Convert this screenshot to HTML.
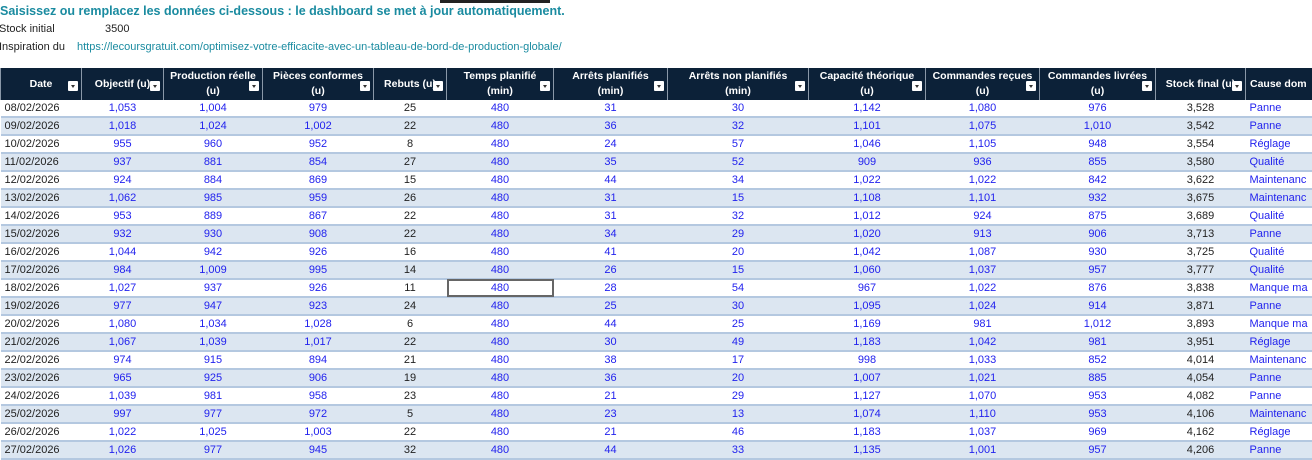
<!DOCTYPE html>
<html><head><meta charset="utf-8"><style>
body{margin:0;width:1312px;height:454px;overflow:hidden;background:#fff;font-family:"Liberation Sans",sans-serif;font-size:11px;color:#222;position:relative}
.t{position:absolute;white-space:nowrap}
table{position:absolute;left:0;top:68px;border-collapse:collapse;table-layout:fixed;width:1335px}
th{background:#0c2138;color:#fff;font-weight:bold;font-size:10.5px;height:32px;padding:0;border-left:1px solid #8a98a8;line-height:15px;position:relative;text-align:center;white-space:nowrap;overflow:hidden}
th i{position:absolute;right:3px;bottom:9px;width:10px;height:10px;background:#fff;border-radius:1px}
th i:after{content:"";position:absolute;left:3px;top:4px;border:2px solid transparent;border-top:3px solid #333}
td{height:16px;padding:0;border-bottom:2px solid #b4c8e0;text-align:center;color:#2222ee;white-space:nowrap;overflow:hidden}
tr.a td{background:#dce6f1}
td.d{text-align:left;padding-left:4px;color:#222}
td.k{color:#222}
td.c{text-align:left;padding-left:4px}
</style></head><body>
<div class="t" style="left:440px;top:0;width:110px;height:3px;background:#222"></div>
<div class="t" style="left:0;top:4px;font-weight:bold;color:#1a8ba0;font-size:12.5px">Saisissez ou remplacez les données ci-dessous : le dashboard se met à jour automatiquement.</div>
<div class="t" style="left:-1px;top:23px">Stock initial</div>
<div class="t" style="left:105px;top:23px">3500</div>
<div class="t" style="left:-1px;top:41px">Inspiration du</div>
<div class="t" style="left:77px;top:41px;color:#1a8ba0">https://lecoursgratuit.com/optimisez-votre-efficacite-avec-un-tableau-de-bord-de-production-globale/</div>
<table>
<colgroup><col style="width:81px"><col style="width:82px"><col style="width:99px"><col style="width:111px"><col style="width:73px"><col style="width:107px"><col style="width:114px"><col style="width:141px"><col style="width:117px"><col style="width:114px"><col style="width:116px"><col style="width:90px"><col style="width:90px"></colgroup>
<tr><th>Date <i></i></th><th>Objectif (u)<i></i></th><th>Production réelle<br>(u)<i></i></th><th>Pièces conformes<br>(u)<i></i></th><th>Rebuts (u)<i></i></th><th>Temps planifié<br>(min)<i></i></th><th>Arrêts planifiés<br>(min)<i></i></th><th>Arrêts non planifiés<br>(min)<i></i></th><th>Capacité théorique<br>(u)<i></i></th><th>Commandes reçues<br>(u)<i></i></th><th>Commandes livrées<br>(u)<i></i></th><th>Stock final (u)<i></i></th><th style="text-align:left;padding-left:4px">Cause dom</th></tr>
<tr><td class="d">08/02/2026</td><td>1,053</td><td>1,004</td><td>979</td><td class="k">25</td><td>480</td><td>31</td><td>30</td><td>1,142</td><td>1,080</td><td>976</td><td class="k">3,528</td><td class="c">Panne</td></tr>
<tr class="a"><td class="d">09/02/2026</td><td>1,018</td><td>1,024</td><td>1,002</td><td class="k">22</td><td>480</td><td>36</td><td>32</td><td>1,101</td><td>1,075</td><td>1,010</td><td class="k">3,542</td><td class="c">Panne</td></tr>
<tr><td class="d">10/02/2026</td><td>955</td><td>960</td><td>952</td><td class="k">8</td><td>480</td><td>24</td><td>57</td><td>1,046</td><td>1,105</td><td>948</td><td class="k">3,554</td><td class="c">Réglage</td></tr>
<tr class="a"><td class="d">11/02/2026</td><td>937</td><td>881</td><td>854</td><td class="k">27</td><td>480</td><td>35</td><td>52</td><td>909</td><td>936</td><td>855</td><td class="k">3,580</td><td class="c">Qualité</td></tr>
<tr><td class="d">12/02/2026</td><td>924</td><td>884</td><td>869</td><td class="k">15</td><td>480</td><td>44</td><td>34</td><td>1,022</td><td>1,022</td><td>842</td><td class="k">3,622</td><td class="c">Maintenanc</td></tr>
<tr class="a"><td class="d">13/02/2026</td><td>1,062</td><td>985</td><td>959</td><td class="k">26</td><td>480</td><td>31</td><td>15</td><td>1,108</td><td>1,101</td><td>932</td><td class="k">3,675</td><td class="c">Maintenanc</td></tr>
<tr><td class="d">14/02/2026</td><td>953</td><td>889</td><td>867</td><td class="k">22</td><td>480</td><td>31</td><td>32</td><td>1,012</td><td>924</td><td>875</td><td class="k">3,689</td><td class="c">Qualité</td></tr>
<tr class="a"><td class="d">15/02/2026</td><td>932</td><td>930</td><td>908</td><td class="k">22</td><td>480</td><td>34</td><td>29</td><td>1,020</td><td>913</td><td>906</td><td class="k">3,713</td><td class="c">Panne</td></tr>
<tr><td class="d">16/02/2026</td><td>1,044</td><td>942</td><td>926</td><td class="k">16</td><td>480</td><td>41</td><td>20</td><td>1,042</td><td>1,087</td><td>930</td><td class="k">3,725</td><td class="c">Qualité</td></tr>
<tr class="a"><td class="d">17/02/2026</td><td>984</td><td>1,009</td><td>995</td><td class="k">14</td><td>480</td><td>26</td><td>15</td><td>1,060</td><td>1,037</td><td>957</td><td class="k">3,777</td><td class="c">Qualité</td></tr>
<tr><td class="d">18/02/2026</td><td>1,027</td><td>937</td><td>926</td><td class="k">11</td><td style="outline:2px solid #666;outline-offset:-2px">480</td><td>28</td><td>54</td><td>967</td><td>1,022</td><td>876</td><td class="k">3,838</td><td class="c">Manque ma</td></tr>
<tr class="a"><td class="d">19/02/2026</td><td>977</td><td>947</td><td>923</td><td class="k">24</td><td>480</td><td>25</td><td>30</td><td>1,095</td><td>1,024</td><td>914</td><td class="k">3,871</td><td class="c">Panne</td></tr>
<tr><td class="d">20/02/2026</td><td>1,080</td><td>1,034</td><td>1,028</td><td class="k">6</td><td>480</td><td>44</td><td>25</td><td>1,169</td><td>981</td><td>1,012</td><td class="k">3,893</td><td class="c">Manque ma</td></tr>
<tr class="a"><td class="d">21/02/2026</td><td>1,067</td><td>1,039</td><td>1,017</td><td class="k">22</td><td>480</td><td>30</td><td>49</td><td>1,183</td><td>1,042</td><td>981</td><td class="k">3,951</td><td class="c">Réglage</td></tr>
<tr><td class="d">22/02/2026</td><td>974</td><td>915</td><td>894</td><td class="k">21</td><td>480</td><td>38</td><td>17</td><td>998</td><td>1,033</td><td>852</td><td class="k">4,014</td><td class="c">Maintenanc</td></tr>
<tr class="a"><td class="d">23/02/2026</td><td>965</td><td>925</td><td>906</td><td class="k">19</td><td>480</td><td>36</td><td>20</td><td>1,007</td><td>1,021</td><td>885</td><td class="k">4,054</td><td class="c">Panne</td></tr>
<tr><td class="d">24/02/2026</td><td>1,039</td><td>981</td><td>958</td><td class="k">23</td><td>480</td><td>21</td><td>29</td><td>1,127</td><td>1,070</td><td>953</td><td class="k">4,082</td><td class="c">Panne</td></tr>
<tr class="a"><td class="d">25/02/2026</td><td>997</td><td>977</td><td>972</td><td class="k">5</td><td>480</td><td>23</td><td>13</td><td>1,074</td><td>1,110</td><td>953</td><td class="k">4,106</td><td class="c">Maintenanc</td></tr>
<tr><td class="d">26/02/2026</td><td>1,022</td><td>1,025</td><td>1,003</td><td class="k">22</td><td>480</td><td>21</td><td>46</td><td>1,183</td><td>1,037</td><td>969</td><td class="k">4,162</td><td class="c">Réglage</td></tr>
<tr class="a"><td class="d">27/02/2026</td><td>1,026</td><td>977</td><td>945</td><td class="k">32</td><td>480</td><td>44</td><td>33</td><td>1,135</td><td>1,001</td><td>957</td><td class="k">4,206</td><td class="c">Panne</td></tr>
</table>
</body></html>
